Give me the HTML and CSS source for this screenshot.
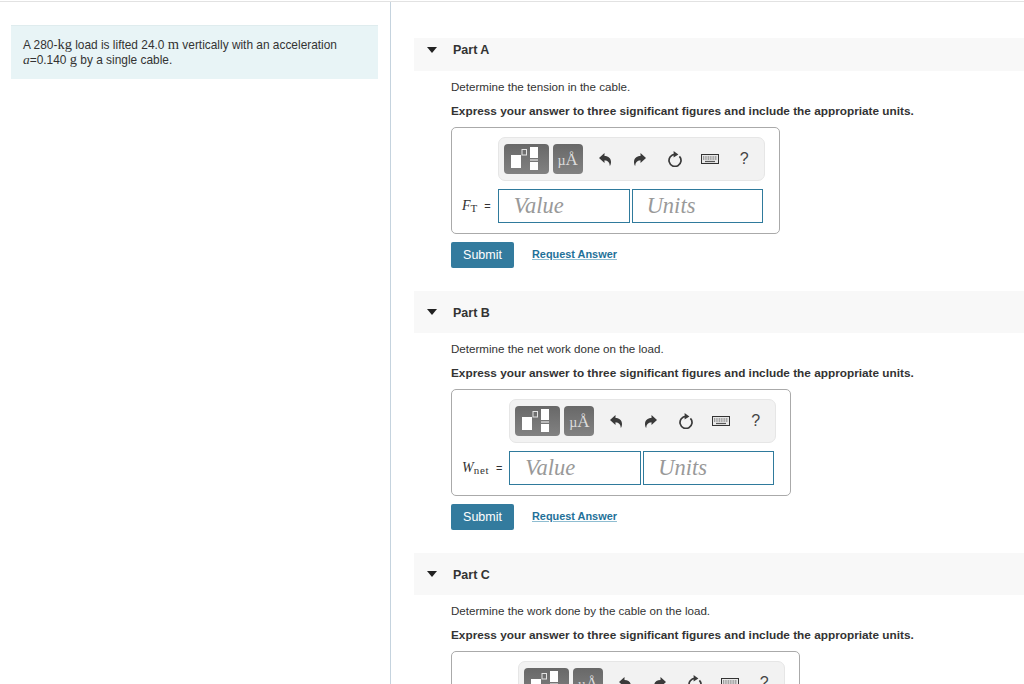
FILE: index.html
```html
<!DOCTYPE html>
<html lang="en">
<head>
<meta charset="UTF-8">
<title>Lifting a load</title>
<link rel="stylesheet" href="styles.css">
</head>
<body>
<svg class="defs" width="0" height="0">
  <symbol id="ico-undo" viewBox="0 0 12 13"><path d="M0 5 L5.5 0 V3 C9.5 3 12 5.5 12 9 C12 10.5 11.6 12 10.8 13 C10.8 9.5 9 7.4 5.5 7.2 V10 Z" fill="#3a3a3a"/></symbol>
  <symbol id="ico-redo" viewBox="0 0 12 13"><path d="M12 5 L6.5 0 V3 C2.5 3 0 5.5 0 9 C0 10.5 .4 12 1.2 13 C1.2 9.5 3 7.4 6.5 7.2 V10 Z" fill="#3a3a3a"/></symbol>
  <symbol id="ico-reset" viewBox="0 0 14 16"><path d="M7 3.4 A6 6 0 1 0 11.4 5.3" fill="none" stroke="#3a3a3a" stroke-width="1.7"/><path d="M5.6 0 L10.4 3.4 L5.6 6.4 Z" fill="#3a3a3a"/></symbol>
  <symbol id="ico-keys" viewBox="0 0 18 10"><rect x=".5" y=".5" width="17" height="9" fill="#e8e8e8" stroke="#333"/><path d="M2 3 H16 M2 5 H16" stroke="#555" stroke-width="1.2" stroke-dasharray="1 .7"/><path d="M4 7.5 H14" stroke="#555" stroke-width="1.2"/></symbol>
  <symbol id="ico-templates" viewBox="0 0 45 30">
    <rect x="7" y="11" width="10" height="13" fill="#fff"/>
    <rect x="18" y="5.5" width="4.5" height="5.5" fill="none" stroke="#e4e4e4"/>
    <rect x="26" y="3" width="8" height="11" fill="#fff"/>
    <rect x="26" y="15.5" width="8" height="1" fill="#fff"/>
    <rect x="26" y="18" width="8" height="8" fill="#fff"/>
  </symbol>
</svg>

<div class="page">
  <aside class="left">
    <div class="problem">
      A 280-<span class="unit">kg</span> load is lifted 24.0 <span class="unit">m</span> vertically with an acceleration<br>
      <i class="var">a</i>=0.140 <span class="unit">g</span> by a single cable.
    </div>
  </aside>

  <main class="right">
    <section class="part part-first">
      <div class="part-head"><span class="caret"></span><h2>Part A</h2></div>
      <div class="part-body">
        <p class="prompt">Determine the tension in the cable.</p>
        <p class="instr">Express your answer to three significant figures and include the appropriate units.</p>
        <div class="answer-box">
          <div class="toolbar">
            <span class="tool tool-wide"><svg width="45" height="30"><use href="#ico-templates"/></svg></span>
            <span class="tool tool-unit"><span class="mu">µ</span>Å</span>
            <svg class="i-undo" width="12" height="13"><use href="#ico-undo"/></svg>
            <svg class="i-redo" width="12" height="13"><use href="#ico-redo"/></svg>
            <svg class="i-reset" width="14" height="16"><use href="#ico-reset"/></svg>
            <svg class="i-keys" width="18" height="10"><use href="#ico-keys"/></svg>
            <span class="help">?</span>
          </div>
          <label class="eq"><i>F</i><span class="sub">T</span> <span class="equals">=</span></label>
          <div class="inputs">
            <input type="text" placeholder="Value">
            <input type="text" placeholder="Units">
          </div>
        </div>
        <div class="actions">
          <button type="button" class="submit">Submit</button>
          <a class="req" href="#">Request Answer</a>
        </div>
      </div>
    </section>

    <section class="part">
      <div class="part-head"><span class="caret"></span><h2>Part B</h2></div>
      <div class="part-body">
        <p class="prompt">Determine the net work done on the load.</p>
        <p class="instr">Express your answer to three significant figures and include the appropriate units.</p>
        <div class="answer-box">
          <div class="toolbar">
            <span class="tool tool-wide"><svg width="45" height="30"><use href="#ico-templates"/></svg></span>
            <span class="tool tool-unit"><span class="mu">µ</span>Å</span>
            <svg class="i-undo" width="12" height="13"><use href="#ico-undo"/></svg>
            <svg class="i-redo" width="12" height="13"><use href="#ico-redo"/></svg>
            <svg class="i-reset" width="14" height="16"><use href="#ico-reset"/></svg>
            <svg class="i-keys" width="18" height="10"><use href="#ico-keys"/></svg>
            <span class="help">?</span>
          </div>
          <label class="eq"><i>W</i><span class="sub sub-net">net</span> <span class="equals">=</span></label>
          <div class="inputs">
            <input type="text" placeholder="Value">
            <input type="text" placeholder="Units">
          </div>
        </div>
        <div class="actions">
          <button type="button" class="submit">Submit</button>
          <a class="req" href="#">Request Answer</a>
        </div>
      </div>
    </section>

    <section class="part">
      <div class="part-head"><span class="caret"></span><h2>Part C</h2></div>
      <div class="part-body">
        <p class="prompt">Determine the work done by the cable on the load.</p>
        <p class="instr">Express your answer to three significant figures and include the appropriate units.</p>
        <div class="answer-box">
          <div class="toolbar">
            <span class="tool tool-wide"><svg width="45" height="30"><use href="#ico-templates"/></svg></span>
            <span class="tool tool-unit"><span class="mu">µ</span>Å</span>
            <svg class="i-undo" width="12" height="13"><use href="#ico-undo"/></svg>
            <svg class="i-redo" width="12" height="13"><use href="#ico-redo"/></svg>
            <svg class="i-reset" width="14" height="16"><use href="#ico-reset"/></svg>
            <svg class="i-keys" width="18" height="10"><use href="#ico-keys"/></svg>
            <span class="help">?</span>
          </div>
          <label class="eq"><i>W</i><span class="sub sub-cable">cable</span> <span class="equals">=</span></label>
          <div class="inputs">
            <input type="text" placeholder="Value">
            <input type="text" placeholder="Units">
          </div>
        </div>
      </div>
    </section>
  </main>
</div>
</body>
</html>
```

FILE: styles.css
```css
html, body {
  margin: 0;
  height: 100%;
  overflow: hidden;
}

body {
  font-family: "Liberation Sans", Arial, sans-serif;
  font-size: 12px;
  color: #333;
  background-color: #fff;
}

.defs {
  position: absolute;
}

.page {
  display: flex;
  height: 100%;
  margin-top: 1px;
  border-top: 1px solid #e2e2e2;
  box-sizing: border-box;
}

.left {
  width: 367px;
  flex: none;
  border-right: 1px solid #c5d3de;
  padding: 23px 12px 0 11px;
}

.problem {
  background-color: #e8f4f6;
  border-top: 1px solid #dfecee;
  padding: 11px 12px 14px;
  line-height: 14px;
  height: 28px;
  font-size: 11.9px;
}

.unit {
  font-family: "Liberation Serif", serif;
  font-size: 14.5px;
}

.var {
  font-family: "Liberation Serif", serif;
  font-size: 13.5px;
}

.right {
  flex: 1;
  padding: 36px 0 0 23px;
  min-width: 0;
}

.part {
  padding-bottom: 23px;
}

.part-head {
  display: flex;
  align-items: center;
  height: 42px;
  background-color: #f8f8f8;
  padding-left: 13px;
}

.part-first .part-head {
  height: 33px;
  align-items: flex-start;
}

.part-first .part-head h2 {
  padding-top: 0;
  line-height: 25px;
}

.part-first .part-head .caret {
  margin-top: 9px;
}

.caret {
  width: 0;
  height: 0;
  border-left: 5.5px solid transparent;
  border-right: 5.5px solid transparent;
  border-top: 6px solid #222;
  margin-right: 16px;
}

.part-head h2 {
  margin: 0;
  padding-top: 2px;
  font-size: 12.5px;
  font-weight: bold;
  color: #333;
}

.part-body {
  padding: 9px 0 0 37px;
}

.prompt {
  margin: 0;
  line-height: 14px;
  font-size: 11.6px;
}

.instr {
  margin: 10px 0 9px;
  line-height: 14px;
  font-weight: bold;
  font-size: 11.8px;
}

.answer-box {
  display: inline-grid;
  grid-template-columns: auto auto;
  row-gap: 8px;
  align-items: center;
  border: 1px solid #aaa;
  border-radius: 5px;
  padding: 9px 14px 10px 10px;
}

.toolbar {
  grid-column: 2;
  display: flex;
  align-items: center;
  width: 267px;
  height: 44px;
  box-sizing: border-box;
  background-color: #f2f2f2;
  border: 1px solid #e6e6e6;
  border-radius: 7px;
  padding-left: 5px;
}

.tool {
  height: 30px;
  border-radius: 4px;
  background: linear-gradient(#686868, #828282);
  display: block;
}

.tool-wide {
  width: 45px;
  margin-right: 4px;
}

.tool-unit {
  width: 30px;
  color: #ddd;
  font-family: "Liberation Serif", serif;
  font-size: 17px;
  line-height: 32px;
  text-align: center;
}

.mu {
  font-size: 14px;
}

.i-undo {
  margin-left: 16px;
}

.i-redo {
  margin-left: 23px;
}

.i-reset {
  margin-left: 22px;
}

.i-keys {
  margin-left: 19px;
}

.help {
  margin-left: 21px;
  font-size: 16px;
  color: #444;
}

.eq {
  grid-column: 1;
  font-family: "Liberation Serif", serif;
  font-size: 14px;
  color: #333;
  padding-right: 7px;
  white-space: nowrap;
}

.sub {
  font-size: 11px;
  letter-spacing: .4px;
  position: relative;
  top: 2px;
}

.sub-net {
  letter-spacing: .75px;
}

.sub-cable {
  letter-spacing: .2px;
}

.equals {
  font-family: "Liberation Sans", sans-serif;
  font-size: 11px;
  margin-left: 3px;
}

.inputs {
  display: flex;
  gap: 2px;
}

.inputs input {
  width: 132px;
  height: 34px;
  box-sizing: border-box;
  border: 1px solid #2f7a9c;
  padding: 0 15px;
  font-family: "Liberation Serif", serif;
  font-style: italic;
  font-size: 22.5px;
  outline: none;
}

.inputs input + input {
  width: 131px;
  padding: 0 14px;
}

.inputs input::placeholder {
  color: #999;
  opacity: 1;
}

.actions {
  display: flex;
  align-items: center;
  margin-top: 8px;
}

.submit {
  width: 63px;
  height: 26px;
  border: none;
  border-radius: 2px;
  background-color: #337b9e;
  color: #fff;
  font-family: "Liberation Sans", sans-serif;
  font-size: 12.5px;
  padding: 0;
}

.req {
  margin-left: 18px;
  margin-bottom: 2px;
  font-size: 10.9px;
  font-weight: bold;
  color: #1f7199;
  text-decoration-color: #8fbdd1;
}
```
